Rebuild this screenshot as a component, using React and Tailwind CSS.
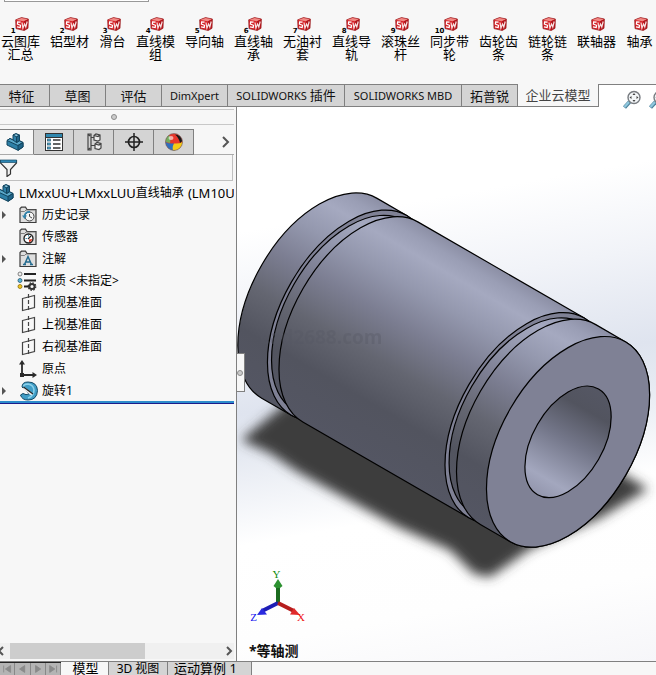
const commands = [
  { label: "云图库汇总", num: 1 },
  { label: "铝型材", num: 2 },
  { label: "滑台", num: 3, narrow: true },
  { label: "直线模组", num: 4 },
  { label: "导向轴", num: 5 },
  { label: "直线轴承", num: 6 },
  { label: "无油衬套", num: 7 },
  { label: "直线导轨", num: 8 },
  { label: "滚珠丝杆", num: 9 },
  { label: "同步带轮", num: 10 },
  { label: "齿轮齿条" },
  { label: "链轮链条" },
  { label: "联轴器" },
  { label: "轴承", narrow: true },
];

const ribbonTabs = [
  { label: "特征", width: "w-[50px] pr-1.5" },
  { label: "草图", width: "w-[56px]" },
  { label: "评估", width: "w-[56px]" },
  { latin: "DimXpert", width: "w-[66px]" },
  { latin: "SOLIDWORKS ", label: "插件", width: "w-[117px]" },
  { latin: "SOLIDWORKS MBD", width: "w-[117px]" },
  { label: "拓普锐", width: "w-[56px]" },
  { label: "企业云模型", width: "w-[81px]", active: true },
];

function CubeIcon() {
  return (
    <svg viewBox="0 0 14 14" className="w-3.5 h-3.5" aria-hidden="true">
      <path d="M.7 2.800 6.500 .6 13.400 2 13 11.300 9.200 13.500 1 11.600Z" fill="#d5252b" stroke="#8f1519" strokeWidth=".7" />
      <path d="M1 2.900 6.500 .9 13 2.200 9 4.200Z" fill="#f08a85" />
      <path d="M9 4.200 13 2.200 12.700 11.100 9 13.200Z" fill="#ae151b" />
      <path d="M5.600 5.200 2.600 4.900 2.400 7 5.500 8.300 5.200 10.600 2 9.800" fill="none" stroke="#fff" strokeWidth="1.200" />
      <path d="M7 5.500 7.900 11 9.600 7 10.800 10 12.200 4.500" fill="none" stroke="#f7e4e4" strokeWidth="1.200" />
    </svg>
  );
}

function PartIcon() {
  return (
    <svg viewBox="0 0 18 18" className="w-[18px] h-[18px] shrink-0" aria-hidden="true">
      <g stroke="#12445e" strokeWidth="1" strokeLinejoin="round">
        <path d="M1 7.500 4 5.500 7 7V2L10 .7 13.500 2.200V7.800L17 9.500V14L12 17.300 1 12Z" fill="#2d7fa6" />
        <path d="M7 2 10 .7 13.500 2.200 10.500 3.800Z" fill="#8fcbe2" />
        <path d="M1 7.500 4 5.500 7 7 10.500 9.500 13.500 7.800 17 9.500 12 12.500Z" fill="#5aa7c8" />
        <path d="M10.500 3.800 13.500 2.200V7.800L10.500 9.500Z" fill="#1f6488" />
        <path d="M12 12.500 17 9.500V14L12 17.300Z" fill="#1f6488" />
      </g>
    </svg>
  );
}

function PropertyIcon() {
  return (
    <svg viewBox="0 0 18 18" className="w-[18px] h-[18px]" aria-hidden="true">
      <rect x=".5" y=".5" width="17" height="17" fill="#fff" stroke="#333" />
      <rect x="1" y="1" width="16" height="3" fill="#2f87ae" />
      <path d="M1 4.5H17" stroke="#333" />
      {[6, 10, 14].map((y) => (
        <g key={y}>
          <rect x="2.5" y={y} width="3" height="2" fill="#5aa9cc" stroke="#23576f" strokeWidth=".7" />
          <path d={`M8 ${y + 1}H15.500`} stroke="#222" strokeWidth="1.4" />
        </g>
      ))}
    </svg>
  );
}

function ConfigIcon() {
  return (
    <svg viewBox="0 0 18 18" className="w-[18px] h-[18px]" fill="none" stroke="#444" strokeWidth="1.2" aria-hidden="true">
      <path d="M3 1H6V17H3ZM6 4.500H9M6 12.500H10M3 1 5 3M3 17 5 15" />
      <path d="M9 2.500 11 1 15 2V7L13 8 9 7ZM9 2.500 13 3.500 15 2M10 11 12 9.500 16 10.500V15L14 16.500 10 15.500ZM10 11 14 12 16 10.500" fill="#eee" />
    </svg>
  );
}

function TargetIcon() {
  return (
    <svg viewBox="0 0 18 18" className="w-[18px] h-[18px]" fill="none" stroke="#222" aria-hidden="true">
      <circle cx="9" cy="9" r="5.500" strokeWidth="1.7" />
      <path d="M9 0V18M0 9H18" strokeWidth="1.500" />
    </svg>
  );
}

function AppearanceIcon() {
  return (
    <svg viewBox="0 0 18 18" className="w-[18px] h-[18px]" aria-hidden="true">
      <circle cx="9" cy="9" r="8.500" fill="#e8362b" />
      <path d="M.5 9A8.500 8.500 0 0 1 4 2.200Q6 5 5 10Z" fill="#74ad5c" />
      <path d="M.5 9Q4 11 9 10.500 8 14 10 17.400A8.500 8.500 0 0 1 .5 9" fill="#2f6fbe" />
      <path d="M9 10.500Q14 11 17.500 9A8.500 8.500 0 0 1 8 17.400Q7 14 9 10.500" fill="#f4cb17" />
      <path d="M10 1.500Q16 1.500 17.300 8L15 10Q14 5 10 1.500" fill="#191919" />
      <ellipse cx="6" cy="5" rx="2.500" ry="2" fill="#fff" opacity=".6" />
      <circle cx="9" cy="9" r="8.500" fill="none" stroke="#666" strokeWidth=".6" />
    </svg>
  );
}

function FilterIcon() {
  return (
    <svg viewBox="0 0 18 18" className="w-[18px] h-[18px]" aria-hidden="true">
      <path d="M.5 1.500H16.500V4L10.500 10.500V15L7 17.500V10.500L.5 4Z" fill="#f2f2f2" stroke="#333" strokeWidth="1.2" />
      <rect x=".5" y="1" width="16" height="2.500" fill="#2f87b4" stroke="#174d69" strokeWidth=".7" />
    </svg>
  );
}

function FolderIcon({ children }) {
  return (
    <svg viewBox="0 0 18 18" className="w-[18px] h-[18px]" aria-hidden="true">
      <path d="M1 16.500V2.500L2.500 1.200H6.500L8 3.500H17V16.500Z" fill="#dedede" stroke="#3c3c3c" strokeWidth="1.2" />
      <path d="M1.500 5.500H5.500L7 4H16.500" fill="none" stroke="#666" strokeWidth=".8" />
      {children}
    </svg>
  );
}

function HistoryIcon() {
  return (
    <FolderIcon>
      <circle cx="10.500" cy="10.500" r="4.500" fill="#f5f5f5" stroke="#444" />
      <path d="M10.500 8V10.500L13 12" fill="none" stroke="#444" />
      <path d="M5.500 10.500Q6 5.500 11 6" fill="none" stroke="#3184ad" strokeWidth="1.800" />
      <path d="M3 9.500H8L5.500 13Z" fill="#3184ad" />
    </FolderIcon>
  );
}

function SensorIcon() {
  return (
    <FolderIcon>
      <circle cx="9.500" cy="10.500" r="4.500" fill="#fff" stroke="#222" strokeWidth="1.400" />
      <path d="M9 11 12 8" stroke="#222" strokeWidth="1.300" />
      <path d="M10 11.500 13 11Q13 14 10 14Z" fill="#e23d28" />
      <path d="M6.500 10.500H8M9.500 7V8.500" stroke="#3d93b8" />
    </FolderIcon>
  );
}

function NoteIcon() {
  return (
    <FolderIcon>
      <path d="M5.500 14.500 9 6.500 12.500 14.500M7 12H11.500M4 14.500H7M11 14.500H14" fill="none" stroke="#246b8f" strokeWidth="1.500" />
    </FolderIcon>
  );
}

function MaterialIcon() {
  return (
    <svg viewBox="0 0 20 20" className="w-5 h-5 -ml-0.5 shrink-0" aria-hidden="true">
      <path d="M7 3H19M7 9.500H19M7 15.500H12" stroke="#222" strokeWidth="1.800" />
      <circle cx="3" cy="3" r="2" fill="#eee" stroke="#666" strokeWidth=".8" />
      <circle cx="3" cy="9.500" r="2" fill="#58b6dd" stroke="#23576f" strokeWidth=".8" />
      <circle cx="3" cy="15.500" r="2" fill="#f2c51e" stroke="#8a6d0b" strokeWidth=".8" />
      <circle cx="15" cy="15.500" r="2.600" fill="none" stroke="#333" strokeWidth="2" />
      <circle cx="15" cy="15.500" r="3.800" fill="none" stroke="#333" strokeWidth="1.200" strokeDasharray="1.500 1.480" />
    </svg>
  );
}

function PlaneIcon() {
  return (
    <svg viewBox="0 0 18 18" className="w-[18px] h-[18px]" fill="none" stroke="#444" strokeWidth="1.200" aria-hidden="true">
      <path d="M3.500 4.500 15.500 1.500V13.500L3.500 16.500Z" />
      <path d="M9.500 0V18" strokeDasharray="4 2" />
    </svg>
  );
}

function OriginIcon() {
  return (
    <svg viewBox="0 0 18 18" className="w-[18px] h-[18px]" aria-hidden="true">
      <path d="M3 3V15H14" fill="none" stroke="#2b2b2b" strokeWidth="1.800" />
      <path d="M3 0 6 4.500H0ZM18 15 13.500 12V18ZM1 13H5V17H1Z" fill="#2b2b2b" />
    </svg>
  );
}

function RevolveIcon() {
  return (
    <svg viewBox="0 0 20 20" className="w-5 h-5" aria-hidden="true">
      <path d="M3 6Q3 1 9 1Q18 1 18.500 9.500Q18 19 9 19Q3 19 1.500 14L4 12.500Q7 14.500 10 13L4.500 7.500Z" fill="#3f9dc6" stroke="#134a66" strokeWidth="1" />
      <path d="M4.500 5.500Q5 3 9 3Q14.500 4 15 9Q15 15 9 17" fill="none" stroke="#8bd0ea" strokeWidth="1.600" />
      <path d="M4.500 7 13 13.500" stroke="#eee" strokeWidth="2.600" />
      <path d="M4.500 6 14 13" stroke="#222" strokeWidth="1.200" />
    </svg>
  );
}

function MagnifierIcon() {
  return (
    <svg viewBox="0 0 20 20" className="w-5 h-5 shrink-0" aria-hidden="true">
      <path d="M2.500 17.500 7.500 12" stroke="#4a7f99" strokeWidth="4" />
      <path d="M2.500 17 7 12" stroke="#8fc7dd" strokeWidth="2.400" />
      <circle cx="12" cy="7.500" r="6" fill="#f3f6f8" stroke="#777b80" strokeWidth="1.400" />
      <path d="M12 3 13.500 5H10.500ZM12 12 13.500 10H10.500ZM7.500 7.500 9.500 6V9ZM16.500 7.500 14.500 6V9Z" fill="#444" />
    </svg>
  );
}

const treeItems = [
  { label: "历史记录", icon: HistoryIcon, expandable: true },
  { label: "传感器", icon: SensorIcon },
  { label: "注解", icon: NoteIcon, expandable: true },
  { label: "材质 <未指定>", icon: MaterialIcon },
  { label: "前视基准面", icon: PlaneIcon },
  { label: "上视基准面", icon: PlaneIcon },
  { label: "右视基准面", icon: PlaneIcon },
  { label: "原点", icon: OriginIcon },
  { label: "旋转1", icon: RevolveIcon, expandable: true },
];

const panelTabs = [
  { name: "属性", icon: PropertyIcon },
  { name: "配置", icon: ConfigIcon },
  { name: "尺寸", icon: TargetIcon },
  { name: "外观", icon: AppearanceIcon },
];

function CommandBar() {
  return (
    <header className="h-[84px] shrink-0">
      <div className="h-[2px] w-[145px] ml-1 border border-t-0 border-[#999] bg-white"></div>
      <nav className="flex -ml-1 pt-[15px]">
        {commands.map((c) => (
          <button
            key={c.label}
            type="button"
            className={`${c.narrow ? "w-[37px]" : "w-[49px]"} shrink-0 flex flex-col items-center text-[13px] leading-[13px]`}
          >
            <span className="relative ml-0.5 mb-1">
              <CubeIcon />
              {c.num && (
                <span className="absolute right-[13px] top-2.5 font-['DejaVu_Sans'] text-[7px] leading-[8px] font-bold">
                  {c.num}
                </span>
              )}
            </span>
            <span className="w-[40px] text-center">{c.label}</span>
          </button>
        ))}
      </nav>
    </header>
  );
}

function RibbonTabs() {
  return (
    <div className="relative z-10 flex h-[23px] shrink-0">
      {ribbonTabs.map((t) => (
        <button
          key={`${t.latin}${t.label}`}
          type="button"
          className={`${t.width} ${
            t.active ? "bg-[#f7f7f7] text-[#444]" : "bg-[#d4d4d4] text-[#111] border-t"
          } text-[13px] leading-5 shrink-0 border-b border-r border-[#808080] whitespace-nowrap`}
        >
          {t.latin && <span className="text-[11px]">{t.latin}</span>}
          {t.label}
        </button>
      ))}
      <div className="flex flex-1 gap-1.5 border-t border-[#808080] bg-white pl-[23px] pt-[5px] overflow-x-clip">
        <MagnifierIcon />
        <MagnifierIcon />
      </div>
    </div>
  );
}

function FeatureTree() {
  return (
    <aside className="w-[237px] shrink-0 flex flex-col border-r border-[#808080] pt-0.5 pr-[2px]">
      <div className="h-4 shrink-0 border-y border-[#c8c8c8] flex items-center justify-center pr-1.5">
        <span className="w-1.5 h-1.5 rounded-full border border-[#8c8c8c] bg-[#ccc]"></span>
      </div>

      <div className="mt-1 flex h-[26px] shrink-0 border-b border-[#aaa]">
        <button type="button" aria-label="特征树" className="w-[33px] border-t border-[#808080] flex items-center pl-1.5">
          <PartIcon />
        </button>
        <div className="flex border-l border-[#808080]">
          {panelTabs.map(({ name, icon: Icon }) => (
            <button
              key={name}
              type="button"
              aria-label={name}
              className="w-10 h-[26px] flex items-center justify-center bg-[#d4d4d4] border-y border-r border-[#808080]"
            >
              <Icon />
            </button>
          ))}
        </div>
        <button type="button" aria-label="更多" className="ml-auto pr-1">
          <svg viewBox="0 0 8 12" className="w-2 h-3" fill="none" stroke="#555" strokeWidth="2">
            <path d="M1 1 6 6 1 11" />
          </svg>
        </button>
      </div>

      <div className="relative h-[26px] shrink-0 mr-[1px] border-b border-r border-[#c0c0c0]">
        <span className="absolute left-0 top-1">
          <FilterIcon />
        </span>
        <input type="text" aria-label="筛选" className="w-full h-full pl-5 text-[12px] outline-none bg-transparent" />
      </div>

      <div className="text-[12px] leading-5 whitespace-nowrap overflow-hidden border-b-2 border-[#2d8dcb] shrink-0">
        <div className="flex items-center h-[22px] pt-0.5 -ml-1">
          <PartIcon />
          <span className="pl-[5px] text-[13px]">LMxxUU+LMxxLUU</span>
          <span>直线轴承</span>
          <span className="pl-1 text-[13px]">(LM10UU)</span>
        </div>
        <ul>
          {treeItems.map(({ label, icon: Icon, expandable }) => (
            <li key={label} className="flex items-center h-[22px] pt-0.5">
              <span className="w-[18px]">
                {expandable && (
                  <svg viewBox="0 0 6 8" className="w-1.5 h-2 ml-px">
                    <path d="M1 0 5 4 1 8Z" fill="#555" />
                  </svg>
                )}
              </span>
              <span className="w-6 h-5 flex items-center pl-px">
                <Icon />
              </span>
              {label}
            </li>
          ))}
        </ul>
      </div>
      <div className="h-px shrink-0 bg-[#1b1b8c]"></div>

      <div className="flex-1"></div>
      <div className="h-4 mb-0.5 shrink-0 flex items-center bg-[#f0f0f0] text-[#555]">
        <svg viewBox="0 0 10 10" className="w-2.5 h-2.5" fill="none" stroke="currentColor" strokeWidth="2">
          <path d="M3 1-1 5 3 9" />
        </svg>
        <div className="w-[135px] h-4 bg-[#cdcdcd]"></div>
        <svg viewBox="0 0 10 10" className="w-2.5 h-2.5 ml-auto" fill="none" stroke="currentColor" strokeWidth="2">
          <path d="M3 1 7 5 3 9" />
        </svg>
      </div>
    </aside>
  );
}

// One length of the shaft; z runs along the axis, r is the radius.
// Depth is foreshortened by 1/sqrt(3) in the isometric view.
function Section({ from, to, r }) {
  const b = r * 0.577;
  return (
    <path
      d={`M${from} ${-r}A${b} ${r} 0 0 0 ${from} ${r}L${to} ${r}A${b} ${r} 0 0 0 ${to} ${-r}Z`}
      fill="url(#steel)"
      stroke="#000"
      strokeWidth="1.2"
    />
  );
}

function Wall({ at, r, fill = "#7f8195" }) {
  return <ellipse cx={at} cy="0" rx={r * 0.577} ry={r} fill={fill} stroke="#000" strokeWidth="1.2" />;
}

function Bearing() {
  return (
    <svg viewBox="237 107 419 554" className="absolute inset-0 w-full h-full" aria-label="直线轴承模型">
      <defs>
        <linearGradient id="steel" gradientUnits="userSpaceOnUse" x1="0" y1="-116" x2="0" y2="116">
          <stop offset="0" stopColor="#8b8ea4" />
          <stop offset=".06" stopColor="#9a9eb5" />
          <stop offset=".13" stopColor="#a5a9c0" />
          <stop offset=".26" stopColor="#9498ae" />
          <stop offset=".42" stopColor="#7c7e92" />
          <stop offset=".6" stopColor="#646671" />
          <stop offset=".78" stopColor="#52545f" />
          <stop offset="1" stopColor="#545663" />
        </linearGradient>
        <linearGradient id="bore" gradientUnits="userSpaceOnUse" x1="0" y1="-61" x2="0" y2="61">
          <stop offset="0" stopColor="#555764" />
          <stop offset=".2" stopColor="#52545f" />
          <stop offset=".5" stopColor="#74778a" />
          <stop offset=".85" stopColor="#a3a7be" />
          <stop offset="1" stopColor="#9396ad" />
        </linearGradient>
        <filter id="soft" x="-20%" y="-20%" width="140%" height="140%">
          <feGaussianBlur stdDeviation="6" />
        </filter>
      </defs>

      <path
        d="M241 440 300 392 620 472 648 489 600 518 530 549 506 566 490 577 474 574 450 550 398 527 298 472 270 453Z"
        fill="#3c3c3c"
        filter="url(#soft)"
      />

      <g transform="translate(319.4 298.3) rotate(30)">
        <Section from={0} to={34.2} r={115.4} />
        <Wall at={34.2} r={115.4} />
        <Section from={34.2} to={47.5} r={109.6} />
        <Section from={47.5} to={239.2} r={115.4} />
        <Wall at={239.2} r={115.4} />
        <Section from={239.2} to={252.5} r={109.6} />
        <Section from={252.5} to={287.1} r={115.4} />
        <Wall at={287.1} r={115.4} />
        <Wall at={287.1} r={61} fill="url(#bore)" />
      </g>

      <text x="260" y="344" fontFamily="Open Sans" fontSize="19" fontWeight="700" fill="#565864" opacity=".35">
        cad2688.com
      </text>

      <g strokeWidth="4">
        <path d="M278 603V585" stroke="#1b6b1f" />
        <path d="M278 603 262 611" stroke="#1d1db5" />
        <path d="M278 603 294 611" stroke="#b51d1d" />
        <path d="M278 579 282.500 586 280 588H276L273.500 586Z" fill="#2c9130" />
        <path d="M257 615 262 608 267 614.500Z" fill="#2a2ae0" />
        <path d="M300 615 294 608 290 614.500Z" fill="#e02a2a" />
      </g>
      <g fontFamily="Liberation Serif" fontSize="11" textAnchor="middle">
        <text x="276.500" y="578" fill="#0a8a0a">Y</text>
        <text x="253.500" y="621" fill="#1010ee">Z</text>
        <text x="301" y="621" fill="#ee1010">X</text>
      </g>
    </svg>
  );
}

function Viewport() {
  return (
    <main className="relative flex-1 overflow-hidden bg-[linear-gradient(170deg,#fff_20%,#f1f3f8_34%,#dfe4ef_49%,#e6eaf2_56%,#fff_70%,#fefefe_86%,#f6f6f9_100%)]">
      <Bearing />
      <button
        type="button"
        aria-label="收起面板"
        className="absolute left-0 top-[246px] w-2 h-[39px] bg-[#f7f7f7] border border-l-0 border-[#808080] flex items-center"
      >
        <span className="w-1.5 h-1.5 rounded-full border border-[#8c8c8c] bg-[#ccc]"></span>
      </button>
      <span className="absolute left-3 bottom-0.5 text-[14px] leading-4 font-bold text-[#111]">*等轴测</span>
    </main>
  );
}

function BottomTabs() {
  const arrows = ["M4 3V11M12 3 6 7 12 11Z", "M11 3 5 7 11 11Z", "M5 3 11 7 5 11Z", "M12 3V11M4 3 10 7 4 11Z"];
  return (
    <footer className="flex h-3.5 shrink-0 border-t border-[#808080] text-[13px] leading-[13px]">
      <div className="flex w-[61px] border-t border-[#222]">
        {arrows.map((d) => (
          <button key={d} type="button" aria-label="切换" className="flex-1 bg-[#b4b4b4] border-r border-[#888]">
            <svg viewBox="0 0 16 14" className="w-full h-3" fill="#8a8a8a" stroke="#8a8a8a">
              <path d={d} />
            </svg>
          </button>
        ))}
      </div>
      <button type="button" className="w-[47px] pl-0.5">模型</button>
      <button type="button" className="w-[60px] bg-[#d4d4d4] border-x border-[#808080] text-[12px]">3D 视图</button>
      <button type="button" className="w-[84px] bg-[#d4d4d4] border-r border-[#808080] pr-2 whitespace-nowrap">运动算例 1</button>
    </footer>
  );
}

export default function App() {
  return (
    <div className="h-screen flex flex-col overflow-hidden bg-[#f7f7f7] text-black font-['Noto_Sans','Noto_Sans_CJK_SC',sans-serif]">
      <CommandBar />
      <RibbonTabs />
      <div className="flex flex-1 min-h-0">
        <FeatureTree />
        <Viewport />
      </div>
      <BottomTabs />
    </div>
  );
}
